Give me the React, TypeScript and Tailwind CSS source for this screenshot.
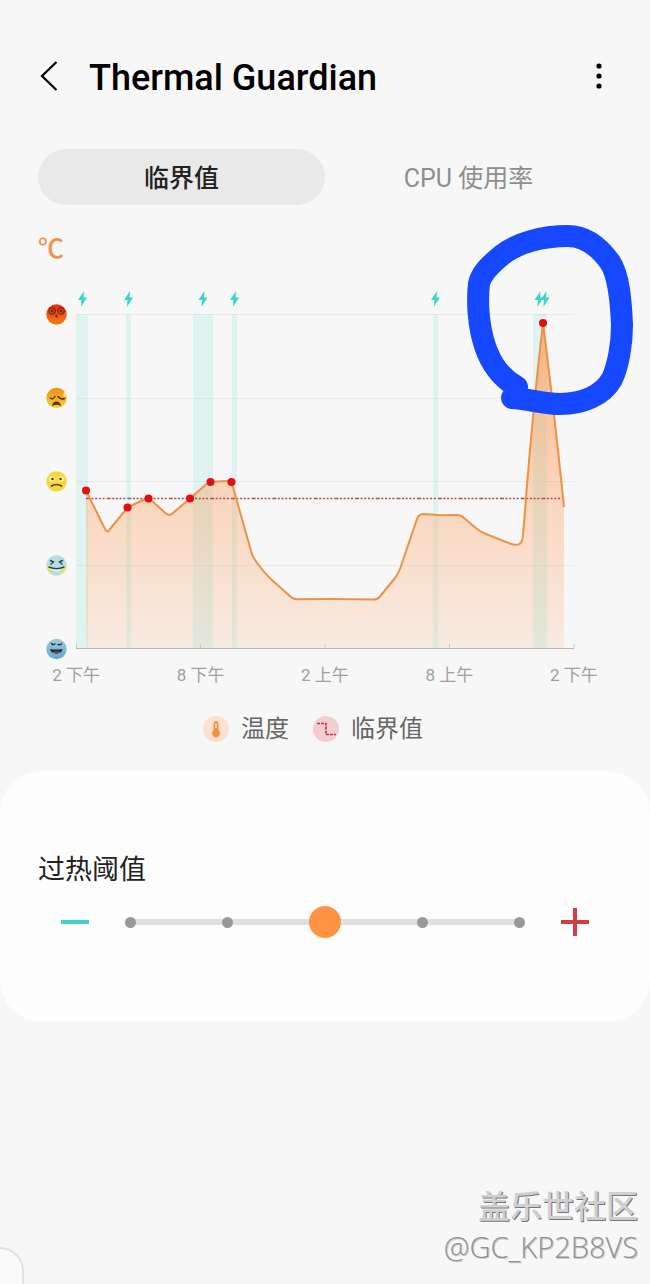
import { useState } from "react";

const TABS = [
  { id: "threshold", label: "临界值" },
  { id: "cpu", label: "CPU 使用率" },
];

const HOURS = ["2 下午", "8 下午", "2 上午", "8 上午", "2 下午"];

const GRID_LINES = [314.5, 398.5, 481.5, 565.5];

const TICKS = [76.5, 200.5, 325, 449.5, 574];

const CHARGING = [
  { x: 76, width: 12 },
  { x: 126, width: 5 },
  { x: 193, width: 20 },
  { x: 232, width: 5 },
  { x: 433, width: 5 },
  { x: 533, width: 14 },
];

const BOLTS = [82.5, 128.5, 203, 234.5, 435.5, 539, 545];

const ALERTS = [
  { x: 86, y: 490.5 },
  { x: 127.5, y: 507.5 },
  { x: 148.5, y: 498.5 },
  { x: 190, y: 498.5 },
  { x: 210.5, y: 482 },
  { x: 231.5, y: 482 },
  { x: 543, y: 323 },
];

const LINE =
  "M86 490.5 L105 529 Q107.5 533.5 110 529 L127.5 507.5 L145 499 Q148.500 497.500 152 501 L166 513.500 Q169.500 516.500 173 513 L190 498.500 L206 484.500 Q210.500 481.500 216 481.500 L228 481 Q231.500 481 233 487 L251 551 Q252.500 556.500 255 560 Q264 573 273 581 L291 597 Q294 599.500 298 599.300 Q335 598.500 374 599.500 Q377.500 599.500 380 596.500 L395 578 Q398 574 400 569 L417 519 Q418.500 514.500 422 514.200 Q430 514 440 515.300 L457 515 Q461 515 464 518 L477 529 Q481 532 486 534 L510 543.500 Q521 547.500 522.500 539 C525 520 528 450 543 323 C549 370 556 430 564 507";

function Bolt({ x }: { x: number }) {
  return (
    <path
      transform={`translate(${x - 5} 291)`}
      d="M6.500 0 L0.500 9 H4 L3.400 16 L9.500 6.500 H6 Z"
      fill="#35d8c8"
    />
  );
}

function Faces() {
  return (
    <g strokeLinecap="round" fill="none">
      <g transform="translate(56.500 314.500)">
        <circle r="10.200" fill="url(#hot)" />
        <g stroke="#7a1d10" strokeWidth="1.100">
          <circle cx="-4.300" cy="-3.500" r="3.200" />
          <circle cx="-4.300" cy="-3.500" r="1" />
          <circle cx="4.500" cy="-3.500" r="3.200" />
          <circle cx="4.500" cy="-3.500" r="1" />
        </g>
        <ellipse cy="1.500" rx="1.200" ry="1.600" fill="#62200d" />
      </g>
      <g transform="translate(56.500 398)">
        <circle r="10.200" fill="url(#warm)" />
        <path
          d="M-6 0 Q-3.500 2 -1.500 -1.500 M1.500 -1.500 Q4 2 8 0.500"
          stroke="#54340e"
          strokeWidth="1.400"
        />
        <path d="M-4.500 8 Q-4 3.500 0 3.500 Q4 3.500 4.500 8 Q0 5.500 -4.500 8 Z" fill="#54340e" />
        <path d="M8 -8 Q11 -2 8.500 -1 Q5.500 -1 8 -8 Z" fill="#ffe07a" />
      </g>
      <g transform="translate(56.500 481.500)">
        <circle r="10.200" fill="#f4d83d" />
        <circle cx="-4.500" cy="-2.500" r="2.800" fill="#fdf19c" />
        <circle cx="4.500" cy="-2.500" r="2.800" fill="#fdf19c" />
        <circle cx="-4" cy="-2.500" r="1.300" fill="#51430f" />
        <circle cx="4" cy="-2.500" r="1.300" fill="#51430f" />
        <path d="M-5 4.500 Q0 1.500 5 4.500" stroke="#51430f" strokeWidth="1.700" />
      </g>
      <g transform="translate(56.500 565.500)">
        <circle r="10.200" fill="#b8dce0" />
        <path
          d="M-10 0 Q-9 6 -4 9 L-7 2 Z M10 0 Q9 6 4 9 L7 2 Z"
          fill="#efe54c"
        />
        <path
          d="M-6 -5 L-3 -3.500 L-5.500 -1.500 M6 -5 L3 -3.500 L5.500 -1.500 M-7.500 1.500 Q0 5 7.500 1.500"
          stroke="#284c4c"
          strokeWidth="1.400"
        />
        <path d="M-6 3 Q0 5.500 6 3 Q0 9 -6 3 Z" fill="#f0f6dc" />
      </g>
      <g transform="translate(56.500 649)">
        <circle r="10.200" fill="url(#cool)" />
        <path
          d="M-5 -5.500 Q-3.500 -3.500 -1.500 -5 M1.500 -4.500 Q4 -3.500 5 -5.500"
          stroke="#203e4a"
          strokeWidth="1.400"
        />
        <path d="M-6.500 0 Q0 1 6 0 Q5.500 4.500 0 4.500 Q-5.500 4.500 -6.500 0 Z" fill="#1b2f3a" />
        <path d="M-3 3.500 Q0 2 3.500 3.500" stroke="#d9485a" strokeWidth="1" />
      </g>
    </g>
  );
}

function TemperatureChart() {
  return (
    <svg
      viewBox="0 265 650 396"
      className="block w-full overflow-visible"
      role="img"
      aria-label="温度"
    >
      <defs>
        <linearGradient id="heat" gradientUnits="userSpaceOnUse" x1="0" y1="323" x2="0" y2="649">
          <stop offset="0" stopColor="#fd9145" stopOpacity="0.65" />
          <stop offset="0.500" stopColor="#fd9145" stopOpacity="0.34" />
          <stop offset="1" stopColor="#fd9145" stopOpacity="0.120" />
        </linearGradient>
        <linearGradient id="hot" x1="0" y1="0" x2="0" y2="1">
          <stop offset="0" stopColor="#e5301c" />
          <stop offset="1" stopColor="#f47d10" />
        </linearGradient>
        <linearGradient id="warm" x1="0" y1="0" x2="0" y2="1">
          <stop offset="0" stopColor="#f08c1e" />
          <stop offset="1" stopColor="#f9d12f" />
        </linearGradient>
        <linearGradient id="cool" x1="0" y1="0" x2="0" y2="1">
          <stop offset="0" stopColor="#9ccbdd" />
          <stop offset="1" stopColor="#62a9cb" />
        </linearGradient>
      </defs>

      {GRID_LINES.map((y) => (
        <path key={y} d={`M76 ${y} H574`} stroke="#e9ebea" />
      ))}
      {CHARGING.map((band) => (
        <rect
          key={band.x}
          x={band.x}
          y="314"
          width={band.width}
          height="334"
          fill="#35d8c8"
          fillOpacity="0.120"
        />
      ))}
      {BOLTS.map((x) => (
        <Bolt key={x} x={x} />
      ))}

      <path d={`${LINE} V648 H86 Z`} fill="url(#heat)" />
      <path d="M76 648.500 H574" stroke="#b9b5b3" />
      {TICKS.map((x) => (
        <path key={x} d={`M${x} 644 V648`} stroke="#c9c9c9" />
      ))}
      <path
        d="M86 498.500 H564"
        stroke="#b34a4a"
        strokeWidth="1.500"
        strokeDasharray="4 1.500 2 1.700 2 1.700 2 1.700 2 2.100"
      />
      <path d={LINE} fill="none" stroke="#ed9145" strokeWidth="2" strokeLinejoin="round" />
      {ALERTS.map((p) => (
        <circle key={p.x} cx={p.x} cy={p.y} r="4" fill="#e60d12" />
      ))}
      <Faces />

      {/* hand-drawn marker around the peak */}
      <path
        d="M517 387 C500 377 491 364 485 346 C478 325 477 300 479 284 C481 273 491 264 502 255 C517 243 542 236 568 236 C588 236 602 251 610 262 C619 276 621 300 622 325 C622 345 618 366 612 379 C603 395 583 404 560 404 C543 404 530 399 512 398"
        fill="none"
        stroke="#1649ff"
        strokeWidth="22"
        strokeLinecap="round"
        strokeLinejoin="round"
      />
    </svg>
  );
}

function ThresholdSlider() {
  const [level, setLevel] = useState(2);
  return (
    <div className="mt-[18px] flex items-center gap-[25px] px-[61px]">
      <button
        type="button"
        aria-label="降低"
        className="flex h-8 w-7 items-center"
        onClick={() => setLevel(Math.max(0, level - 1))}
      >
        <svg viewBox="0 0 28 28" className="w-7" stroke="#3dd3c7" strokeWidth="4">
          <path d="M0 14 H28" />
        </svg>
      </button>
      <div className="grid flex-1 items-center">
        <div className="mx-4 h-[6px] bg-[#dfdfdf] [grid-area:1/1]" />
        <div className="mx-[11px] flex justify-between [grid-area:1/1]">
          {[0, 1, 2, 3, 4].map((stop) => (
            <span key={stop} className="size-[11px] rounded-full bg-[#999]" />
          ))}
        </div>
        <input
          id="overheat"
          type="range"
          min={0}
          max={4}
          value={level}
          onChange={(e) => setLevel(Number(e.target.value))}
          className="h-8 w-full appearance-none bg-transparent [grid-area:1/1] [&::-webkit-slider-thumb]:size-8 [&::-webkit-slider-thumb]:appearance-none [&::-webkit-slider-thumb]:rounded-full [&::-webkit-slider-thumb]:bg-[#ff9343]"
        />
      </div>
      <button
        type="button"
        aria-label="提高"
        className="flex h-8 w-7 items-center"
        onClick={() => setLevel(Math.min(4, level + 1))}
      >
        <svg viewBox="0 0 28 28" className="w-7" stroke="#d33c42" strokeWidth="4">
          <path d="M0 14 H28 M14 0 V28" />
        </svg>
      </button>
    </div>
  );
}

export default function App() {
  const [tab, setTab] = useState("threshold");
  return (
    <div className="relative flex min-h-screen flex-col overflow-hidden bg-[#f7f7f7] font-['Roboto','Noto_Sans_CJK_SC',sans-serif]">
      <header className="mt-12 flex h-14 items-center px-10">
        <button type="button" aria-label="返回" className="w-[49px]">
          <svg viewBox="0 0 18 30" className="h-[30px]" fill="none" stroke="#000" strokeWidth="2.200">
            <path d="M16.500 1 L2 15 L16.500 29" />
          </svg>
        </button>
        <h1 className="flex-1 pt-1 text-[36px] leading-10 font-medium text-black">
          Thermal Guardian
        </h1>
        <button type="button" aria-label="更多" className="w-[22px]">
          <svg viewBox="0 0 22 28" className="w-full" fill="#000">
            <circle cx="11" cy="4" r="2.600" />
            <circle cx="11" cy="14" r="2.600" />
            <circle cx="11" cy="24" r="2.600" />
          </svg>
        </button>
      </header>

      <div role="tablist" className="mt-[45px] grid grid-cols-2 px-[38px]">
        {TABS.map((item) => (
          <button
            key={item.id}
            type="button"
            role="tab"
            aria-selected={tab === item.id}
            onClick={() => setTab(item.id)}
            className={
              tab === item.id
                ? "h-14 rounded-full bg-[#e9e9e9] pt-1 text-[25px] font-medium text-[#222]"
                : "h-14 rounded-full pt-1 text-[25px] text-[#8e8e8e]"
            }
          >
            {item.label}
          </button>
        ))}
      </div>

      <section className="mt-7">
        <p className="px-[38px] text-[26px] leading-8 font-medium text-[#ee9350]">℃</p>
        <TemperatureChart />
        <div className="grid grid-cols-5 px-[14px] text-center text-[17px] leading-7 text-[#a0a0a0]">
          {HOURS.map((hour, i) => (
            <span key={i}>{hour}</span>
          ))}
        </div>
        <ul className="mt-6 flex justify-center text-[24px] leading-8 text-[#666]">
          <li className="mr-6 flex items-center gap-3">
            <svg viewBox="0 0 26 26" className="size-[26px]">
              <circle cx="13" cy="13" r="13" fill="#fce2ce" />
              <path
                d="M10.500 7.500 A2.500 2.500 0 0 1 15.500 7.500 V14.200 A4 4 0 1 1 10.500 14.200 Z"
                fill="#f4914a"
              />
              <path d="M13 7.500 V12" stroke="#fce2ce" strokeWidth="1.500" />
            </svg>
            温度
          </li>
          <li className="mr-6 flex items-center gap-3">
            <svg viewBox="0 0 26 26" className="size-[26px]">
              <circle cx="13" cy="13" r="13" fill="#f3cdcf" />
              <path
                d="M4 7.500 H13 V18.500 H23"
                fill="none"
                stroke="#c63b42"
                strokeWidth="1.700"
                strokeDasharray="3 1"
              />
            </svg>
            临界值
          </li>
        </ul>
      </section>

      <section className="mt-[26px] rounded-[42px] bg-[#fdfdfd] pt-[81px] pb-[84px]">
        <label htmlFor="overheat" className="block px-[38px] text-[27px] leading-9 text-[#222]">
          过热阈值
        </label>
        <ThresholdSlider />
      </section>

      <footer className="mt-auto px-3 pb-[17px] text-right">
        <p className="text-[32px] leading-10 font-medium text-[#cfcfcf] [text-shadow:1px_1px_0_#777]">
          盖乐世社区
        </p>
        <p className="font-['Open_Sans',sans-serif] text-[29px] leading-10 font-light text-[#929292] [text-shadow:1px_1px_0_#ccc]">
          @GC_KP2B8VS
        </p>
      </footer>

      {/* edge panel handle */}
      <div className="absolute bottom-0 left-0 h-[37px] w-6 overflow-hidden rounded-tr-[24px] border-2 border-b-0 border-l-0 border-[#e2e2e2] bg-[#fafafa]" />
    </div>
  );
}
